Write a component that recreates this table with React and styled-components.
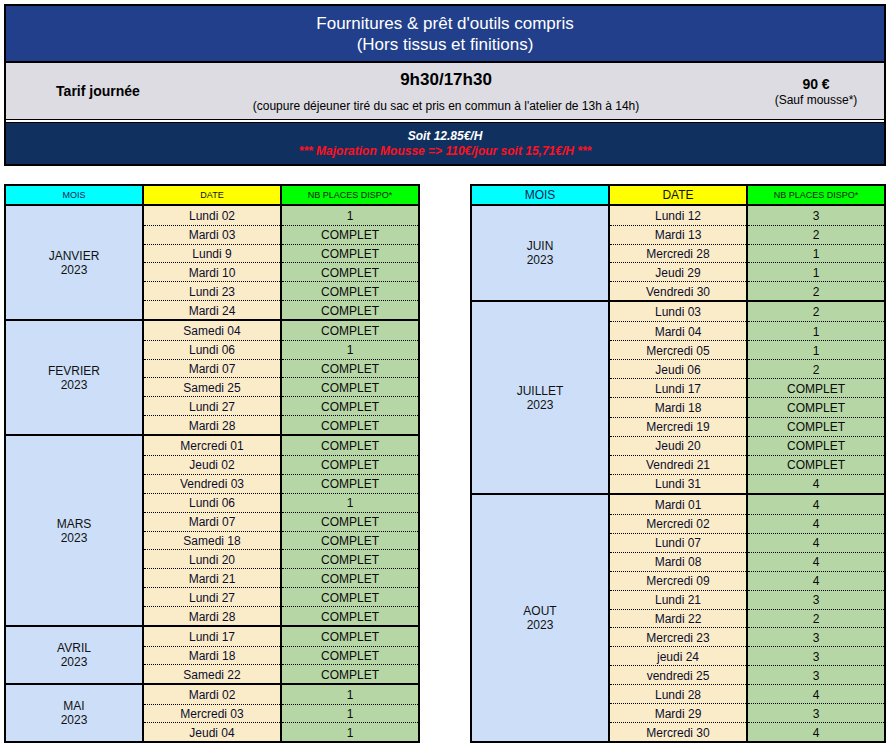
import React from 'react';
import styled, {createGlobalStyle} from 'styled-components';

const GlobalStyle = createGlobalStyle`
  body {
    margin: 0;
    background: #fff;
    font-family: "Liberation Sans", Arial, sans-serif;
  }
`;

const Page = styled.div`
  padding: 4px;
  width: 882px;
`;

const Banner = styled.div`
  border: 2px solid #000;
  display: flex;
  flex-direction: column;
`;

const Title = styled.div`
  height: 55px;
  background: #223f8b;
  border-bottom: 2px solid #000;
  color: #fff;
  font-size: 17px;
  line-height: 21px;
  text-align: center;
  display: flex;
  flex-direction: column;
  justify-content: center;
`;

const Info = styled.div`
  height: 56px;
  background: #dcdce2;
  border-bottom: 1px solid #000;
  display: grid;
  grid-template-columns: 184px 512px 1fr;
  align-items: center;
  color: #000;
`;

const InfoCell = styled.div`
  text-align: center;
  padding-left: ${p => p.$shift || 0}px;
  padding-top: ${p => p.$drop || 0}px;
`;

const Strong = styled.div`
  font-weight: bold;
  font-size: ${p => p.$size || 14}px;
  line-height: ${p => p.$lh || 17}px;
`;

const Small = styled.div`
  font-size: 12px;
  line-height: 15px;
  margin-top: ${p => p.$gap || 0}px;
`;

const Note = styled.div`
  background: #10305f;
  border-top: 2px solid #fff;
  box-shadow: inset 0 1px 0 #000;
  padding-top: 2px;
  height: 40px;
  display: flex;
  flex-direction: column;
  justify-content: center;
  text-align: center;
  font-size: 12px;
  line-height: 15px;
  font-weight: bold;
  font-style: italic;
`;

const NoteLine = styled.div`
  color: ${p => p.$red ? '#ff1020' : '#fff'};
`;

const Tables = styled.div`
  display: flex;
  justify-content: space-between;
  align-items: flex-start;
  margin-top: 18px;
`;

const Table = styled.div`
  width: 412px;
  border: 2px solid #000;
  background: #000;
  display: flex;
  flex-direction: column;
  gap: 2px;
`;

const Head = styled.div`
  display: grid;
  grid-template-columns: 136px 136px 136px;
  gap: 2px;
`;

const HeadCell = styled.div`
  height: 18px;
  background: ${p => p.$bg};
  color: ${p => p.$color || '#111'};
  font-size: ${p => p.$size || 9}px;
  display: flex;
  align-items: center;
  justify-content: center;
`;

const MonthGroup = styled.div`
  display: grid;
  grid-template-columns: 136px 274px;
  gap: 2px;
  height: ${p => p.$rows * 19 - 1 + (p.$extra || 0)}px;
`;

const MonthCell = styled.div`
  background: #cddff8;
  color: #111;
  font-size: 12px;
  line-height: 14px;
  display: flex;
  flex-direction: column;
  align-items: center;
  justify-content: center;
`;

const Days = styled.div`
  display: flex;
  flex-direction: column;
`;

const DayRow = styled.div`
  flex: 1;
  display: grid;
  grid-template-columns: 136px 136px;
  gap: 2px;
`;

const DayCell = styled.div`
  background: ${p => p.$kind === 'date' ? '#fbecc9' : '#b6d6a6'};
  color: ${p => p.$kind === 'date' ? '#0c0c2c' : '#0a0a0a'};
  border-top: ${p => p.$first ? 'none' : '1px dotted #000'};
  padding-top: 1px;
  font-size: 12px;
  display: flex;
  align-items: center;
  justify-content: center;
`;

const left = [
  {month: 'JANVIER', days: [['Lundi 02', '1'], ['Mardi 03', 'COMPLET'], ['Lundi 9', 'COMPLET'], ['Mardi 10', 'COMPLET'], ['Lundi 23', 'COMPLET'], ['Mardi 24', 'COMPLET']]},
  {month: 'FEVRIER', days: [['Samedi 04', 'COMPLET'], ['Lundi 06', '1'], ['Mardi 07', 'COMPLET'], ['Samedi 25', 'COMPLET'], ['Lundi 27', 'COMPLET'], ['Mardi 28', 'COMPLET']]},
  {month: 'MARS', days: [['Mercredi 01', 'COMPLET'], ['Jeudi 02', 'COMPLET'], ['Vendredi 03', 'COMPLET'], ['Lundi 06', '1'], ['Mardi 07', 'COMPLET'], ['Samedi 18', 'COMPLET'], ['Lundi 20', 'COMPLET'], ['Mardi 21', 'COMPLET'], ['Lundi 27', 'COMPLET'], ['Mardi 28', 'COMPLET']]},
  {month: 'AVRIL', days: [['Lundi 17', 'COMPLET'], ['Mardi 18', 'COMPLET'], ['Samedi 22', 'COMPLET']]},
  {month: 'MAI', days: [['Mardi 02', '1'], ['Mercredi 03', '1'], ['Jeudi 04', '1']]},
];

const right = [
  {month: 'JUIN', days: [['Lundi 12', '3'], ['Mardi 13', '2'], ['Mercredi 28', '1'], ['Jeudi 29', '1'], ['Vendredi 30', '2']]},
  {month: 'JUILLET', extra: 2, days: [['Lundi 03', '2'], ['Mardi 04', '1'], ['Mercredi 05', '1'], ['Jeudi 06', '2'], ['Lundi 17', 'COMPLET'], ['Mardi 18', 'COMPLET'], ['Mercredi 19', 'COMPLET'], ['Jeudi 20', 'COMPLET'], ['Vendredi 21', 'COMPLET'], ['Lundi 31', '4']]},
  {month: 'AOUT', days: [['Mardi 01', '4'], ['Mercredi 02', '4'], ['Lundi 07', '4'], ['Mardi 08', '4'], ['Mercredi 09', '4'], ['Lundi 21', '3'], ['Mardi 22', '2'], ['Mercredi 23', '3'], ['jeudi 24', '3'], ['vendredi 25', '3'], ['Lundi 28', '4'], ['Mardi 29', '3'], ['Mercredi 30', '4']]},
];

function Planning({groups, big}) {
  return (
    <Table>
      <Head>
        <HeadCell $bg="#00ffff" $color="#1a1a55" $size={big ? 12 : 9}>MOIS</HeadCell>
        <HeadCell $bg="#ffff00" $size={big ? 12 : 9}>DATE</HeadCell>
        <HeadCell $bg="#00ff00" $color="#0a1a0a">NB PLACES DISPO*</HeadCell>
      </Head>
      {groups.map(g => (
        <MonthGroup key={g.month} $rows={g.days.length} $extra={g.extra}>
          <MonthCell>
            <div>{g.month}</div>
            <div>2023</div>
          </MonthCell>
          <Days>
            {g.days.map(([date, places], i) => (
              <DayRow key={date + i}>
                <DayCell $kind="date" $first={i === 0}>{date}</DayCell>
                <DayCell $kind="places" $first={i === 0}>{places}</DayCell>
              </DayRow>
            ))}
          </Days>
        </MonthGroup>
      ))}
    </Table>
  );
}

export default function App() {
  return (
    <Page>
      <GlobalStyle />
      <Banner>
        <Title>
          <div>Fournitures &amp; prêt d'outils compris</div>
          <div>(Hors tissus et finitions)</div>
        </Title>
        <Info>
          <InfoCell $drop={1}>
            <Strong>Tarif journée</Strong>
          </InfoCell>
          <InfoCell $drop={1}>
            <Strong $size={17} $lh={20}>9h30/17h30</Strong>
            <Small $gap={9}>(coupure déjeuner tiré du sac et pris en commun à l'atelier de 13h à 14h)</Small>
          </InfoCell>
          <InfoCell $shift={46} $drop={2}>
            <Strong>90 €</Strong>
            <Small>(Sauf mousse*)</Small>
          </InfoCell>
        </Info>
        <Note>
          <NoteLine>Soit 12.85€/H</NoteLine>
          <NoteLine $red>*** Majoration Mousse =&gt; 110€/jour soit 15,71€/H ***</NoteLine>
        </Note>
      </Banner>
      <Tables>
        <Planning groups={left} />
        <Planning groups={right} big />
      </Tables>
    </Page>
  );
}
